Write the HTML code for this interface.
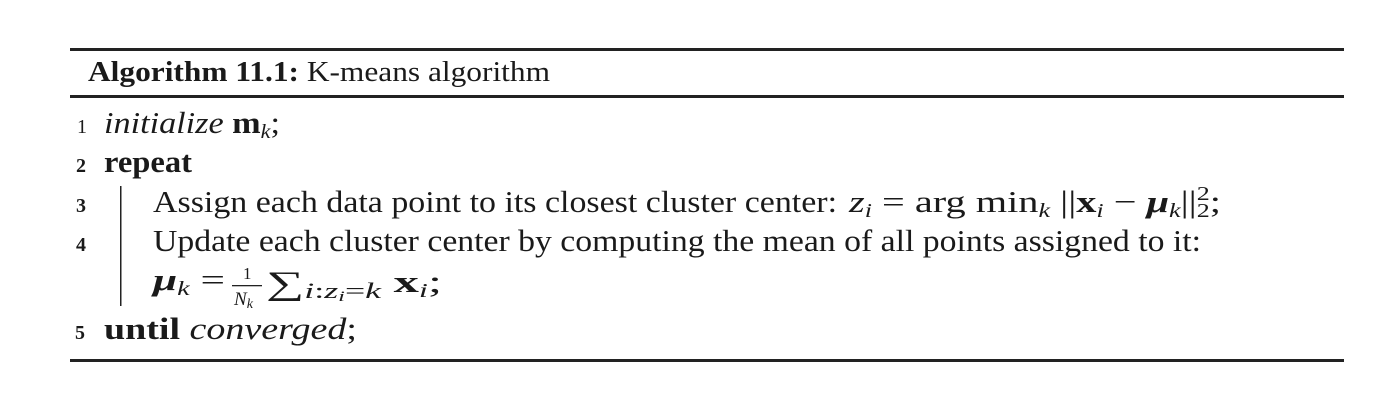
<!DOCTYPE html>
<html><head><style>
html,body{margin:0;padding:0;background:#fff;width:1386px;height:418px;overflow:hidden}
svg{display:block}
text{font-family:"Liberation Serif",serif;fill:#1a1a1a}
</style></head><body>
<svg width="1386" height="418" viewBox="0 0 1386 418" xmlns="http://www.w3.org/2000/svg">
<rect x="70" y="48" width="1274" height="3" fill="#222"/>
<rect x="70" y="95" width="1274" height="3" fill="#222"/>
<rect x="70" y="359" width="1274" height="3" fill="#222"/>
<rect x="120" y="186" width="1.5" height="120" fill="#222"/>

<text x="88" y="81" font-size="28" textLength="462" lengthAdjust="spacingAndGlyphs"><tspan font-weight="bold">Algorithm 11.1:</tspan> K-means algorithm</text>

<text x="77" y="133" font-size="20">1</text>
<text x="104" y="133" font-size="31" textLength="176" lengthAdjust="spacingAndGlyphs"><tspan font-style="italic">initialize</tspan> <tspan font-weight="bold">m</tspan><tspan font-style="italic" font-size="20" dy="5">k</tspan><tspan dy="-5">;</tspan></text>

<text x="76" y="172" font-size="20" font-weight="bold">2</text>
<text x="104" y="172" font-size="31" font-weight="bold" textLength="88" lengthAdjust="spacingAndGlyphs">repeat</text>

<text x="76" y="212" font-size="20" font-weight="bold">3</text>
<text x="153" y="212" font-size="31" textLength="684" lengthAdjust="spacingAndGlyphs">Assign each data point to its closest cluster center:</text>
<text x="849" y="212" font-size="31" textLength="372" lengthAdjust="spacingAndGlyphs"><tspan font-style="italic">z</tspan><tspan font-style="italic" font-size="20" dy="5">i</tspan><tspan dy="-5"> = arg min</tspan><tspan font-style="italic" font-size="20" dy="5">k</tspan><tspan dy="-5"> ||</tspan><tspan font-weight="bold">x</tspan><tspan font-style="italic" font-size="20" dy="5">i</tspan><tspan dy="-5"> − </tspan><tspan font-weight="bold" font-style="italic">μ</tspan><tspan font-style="italic" font-size="20" dy="5">k</tspan><tspan dy="-5">||</tspan><tspan font-size="20" dy="-12">2</tspan><tspan font-size="20" dx="-10" dy="17">2</tspan><tspan dy="-5">;</tspan></text>

<text x="76" y="251" font-size="20" font-weight="bold">4</text>
<text x="153" y="251" font-size="31" textLength="1048" lengthAdjust="spacingAndGlyphs">Update each cluster center by computing the mean of all points assigned to it:</text>

<text x="153" y="290" font-size="31" textLength="72" lengthAdjust="spacingAndGlyphs"><tspan font-weight="bold" font-style="italic">μ</tspan><tspan font-style="italic" font-size="20" dy="5">k</tspan><tspan dy="-5"> =</tspan></text>
<text x="243" y="279" font-size="17">1</text>
<rect x="232" y="285" width="30" height="1.3" fill="#222"/>
<text x="234" y="305" font-size="19" font-style="italic">N<tspan font-size="14" dy="3">k</tspan></text>
<text x="266" y="294" font-size="33" textLength="176" lengthAdjust="spacingAndGlyphs">∑<tspan font-style="italic" font-size="22" dy="4">i</tspan><tspan font-size="22">:</tspan><tspan font-style="italic" font-size="22">z</tspan><tspan font-style="italic" font-size="15" dy="3">i</tspan><tspan font-size="22" dy="-3">=</tspan><tspan font-style="italic" font-size="22">k</tspan><tspan font-size="31" font-weight="bold" dy="-6"> x</tspan><tspan font-style="italic" font-size="20" dy="5">i</tspan><tspan font-size="31" dy="-5">;</tspan></text>

<text x="75" y="339" font-size="20" font-weight="bold">5</text>
<text x="104" y="339" font-size="31" textLength="253" lengthAdjust="spacingAndGlyphs"><tspan font-weight="bold">until</tspan> <tspan font-style="italic">converged</tspan>;</text>
</svg>
</body></html>
